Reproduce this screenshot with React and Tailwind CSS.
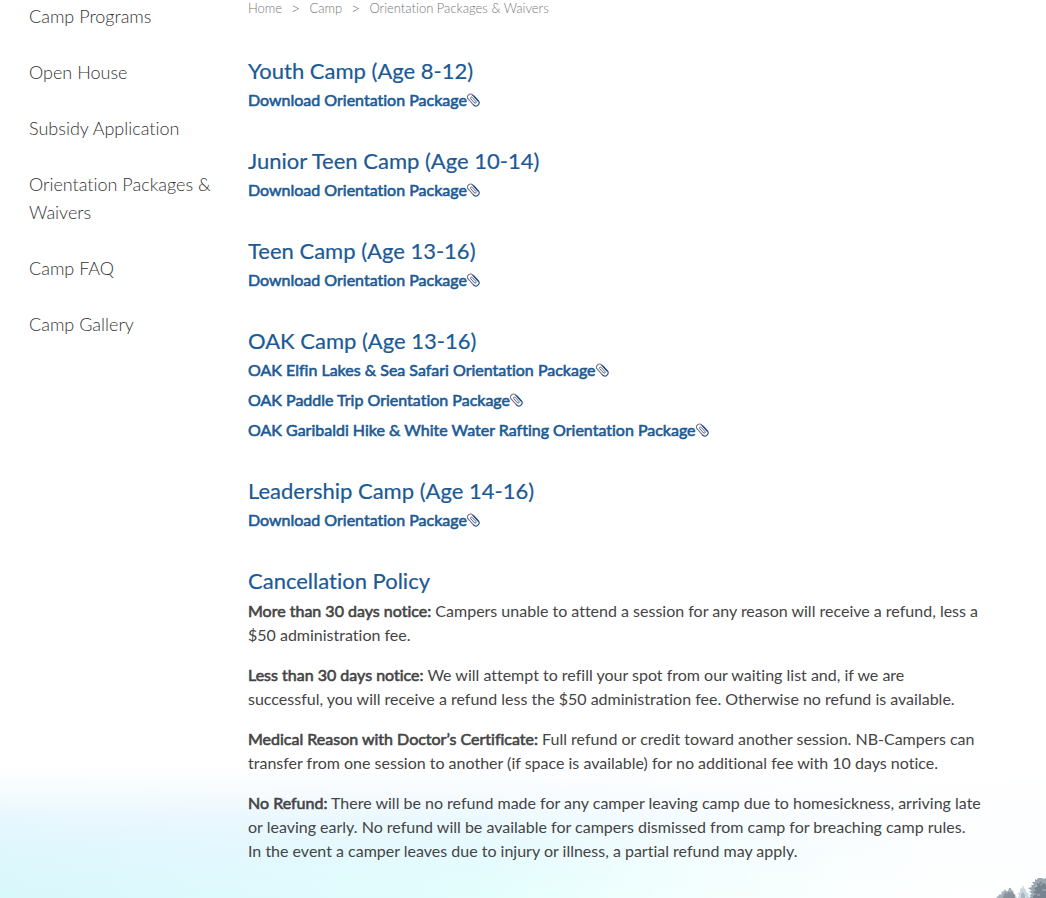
import React from "react";

const navItems = [
  "Camp Programs",
  "Open House",
  "Subsidy Application",
  "Orientation Packages & Waivers",
  "Camp FAQ",
  "Camp Gallery",
];

const camps = [
  { title: "Youth Camp (Age 8-12)", links: ["Download Orientation Package"] },
  { title: "Junior Teen Camp (Age 10-14)", links: ["Download Orientation Package"] },
  { title: "Teen Camp (Age 13-16)", links: ["Download Orientation Package"] },
  {
    title: "OAK Camp (Age 13-16)",
    links: [
      "OAK Elfin Lakes & Sea Safari Orientation Package",
      "OAK Paddle Trip Orientation Package",
      "OAK Garibaldi Hike & White Water Rafting Orientation Package",
    ],
  },
  { title: "Leadership Camp (Age 14-16)", links: ["Download Orientation Package"] },
];

const policies = [
  {
    label: "More than 30 days notice:",
    text: "Campers unable to attend a session for any reason will receive a refund, less a $50 administration fee.",
  },
  {
    label: "Less than 30 days notice:",
    text: "We will attempt to refill your spot from our waiting list and, if we are successful, you will receive a refund less the $50 administration fee. Otherwise no refund is available.",
  },
  {
    label: "Medical Reason with Doctor’s Certificate:",
    text: "Full refund or credit toward another session. NB-Campers can transfer from one session to another (if space is available) for no additional fee with 10 days notice.",
  },
  {
    label: "No Refund:",
    text: "There will be no refund made for any camper leaving camp due to homesickness, arriving late or leaving early. No refund will be available for campers dismissed from camp for breaching camp rules. In the event a camper leaves due to injury or illness, a partial refund may apply.",
  },
];

function Paperclip() {
  return (
    <svg className="h-[14px] w-[13px]" viewBox="0 0 13 14" fill="none" strokeLinecap="round" aria-hidden="true">
      <g transform="rotate(-42 6.5 7)" strokeWidth="1.1">
        <path d="M3.2 10.6V2.9a3 3 0 0 1 6 0" stroke="#7d6f80" />
        <path d="M9.2 2.9v7.6" stroke="#1f4a80" />
        <path d="M3.2 10.6a3.2 3.2 0 0 0 6.4 0V4.6" stroke="#1f4a80" />
        <path d="M5.3 9.6V4.2a1 1 0 0 1 2 0v5.6a1 1 0 0 1-2 0" stroke="#4f5f86" strokeWidth="0.9" />
      </g>
    </svg>
  );
}

function Treeline() {
  return (
    <svg
      className="pointer-events-none absolute right-0 bottom-0 h-[20px] w-[50px]"
      viewBox="0 0 50 20"
      aria-hidden="true"
    >
      <path d="M0 20l2-2 2-2 1 1 1-4 1 1 2-3 1 2 2 0 1-3 2 0 1 3 1-1 1 4 2 1-1 1 2 2z" fill="#a9b1b8" />
      <path d="M7 20l1-3 2-3 1 2 2-3 1 2 2-2 1 3 2 1 0 3z" fill="#89929b" />
      <path d="M22 20l1-3-2-1 3-2 0-3 2-1 1-3 1 3 2 2 0 2 3 2-1 1 2 3z" fill="#cbdae2" />
      <path d="M25 20l0-4 2-2 2 3 0 3z" fill="#a7b7c1" />
      <path
        d="M33 20l2-2-2-1 3-1-3-3 3 0-4-3 4-1-1-2 3 0-2-3 3 0 0-3 2 1 1-3 2 1 1-1 2 2 3-1v20z"
        fill="#9ca8b1"
      />
      <path d="M37 20l1-4-1-2 3-1-2-3 3-1 0-4 2 1 2-3 1 3 2-1 2 2v13z" fill="#77848f" />
      <path d="M36 16h4M39 8h3M44 6l2 1M46 12h4M41 17h3" stroke="#b4bfc7" strokeWidth="0.8" />
    </svg>
  );
}

const headingClass =
  "text-[22px] leading-8 h-[30px] text-[#1b5a95] [-webkit-text-stroke:0.2px_#1b5a95]";

export default function App() {
  return (
    <div className="relative min-h-screen bg-white font-['Lato',sans-serif] text-[#444444] [font-variant-ligatures:none]">
      <div
        aria-hidden="true"
        className="absolute inset-x-0 bottom-0 h-[134px] bg-[linear-gradient(to_right,#ffffff00_45%,#ffffffcc_90%),linear-gradient(to_bottom,#ffffff_0%,#f9fbffdd_22%,#f0f6ff99_42%,#e8f5ff66_65%,#e8f5ff00_100%),linear-gradient(to_right,#d8f8fc_0%,#dffafd_25%,#e4fffd_50%,#eefffe_72%,#f8fffe_90%,#fbfffe_100%)]"
      />
      <Treeline />
      <div className="relative flex pb-[34px]">
        <nav aria-label="Camp" className="w-[219px] shrink-0 pt-[2px] pl-[29px]">
          <ul className="flex flex-col gap-7">
            {navItems.map((item) => (
              <li key={item}>
                <a href="#" className="block text-[18px] leading-7 font-light text-[#333333]">
                  {item}
                </a>
              </li>
            ))}
          </ul>
        </nav>

        <main className="min-w-0 flex-1 pr-16 pl-[29px]">
          <nav
            aria-label="Breadcrumb"
            className="flex gap-[9px] text-[13px] leading-4 font-light text-[#777777]"
          >
            <a href="#">Home</a>
            <span className="text-[16px]">&gt;</span>
            <a href="#">Camp</a>
            <span className="text-[16px]">&gt;</span>
            <span>Orientation Packages &amp; Waivers</span>
          </nav>

          <div className="mt-[39px] flex flex-col gap-[30px]">
            {camps.map((camp) => (
              <section key={camp.title}>
                <h2 className={headingClass}>{camp.title}</h2>
                <ul>
                  {camp.links.map((link) => (
                    <li key={link} className="leading-[30px]">
                      <a
                        href="#"
                        className="inline-flex items-center text-[16px] text-[#1b5a95] [-webkit-text-stroke:0.6px_#1b5a95]"
                      >
                        {link}
                        <Paperclip />
                      </a>
                    </li>
                  ))}
                </ul>
              </section>
            ))}

            <section>
              <h2 className={headingClass}>Cancellation Policy</h2>
              <div className="mt-1 flex flex-col gap-4">
                {policies.map((policy) => (
                  <p key={policy.label} className="text-[16px] leading-6">
                    <strong className="font-normal [-webkit-text-stroke:0.6px_#444444]">{policy.label}</strong>{" "}
                    {policy.text}
                  </p>
                ))}
              </div>
            </section>
          </div>
        </main>
      </div>
    </div>
  );
}
